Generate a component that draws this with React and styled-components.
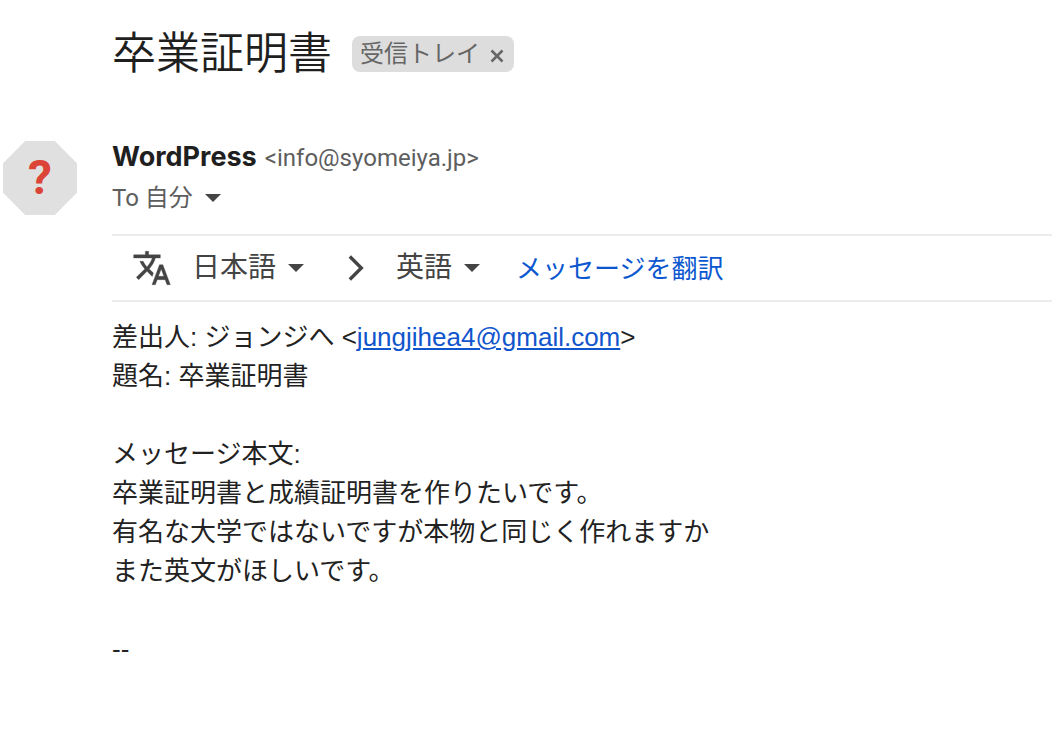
import React, { useState } from 'react';
import styled, { createGlobalStyle } from 'styled-components';

const GlobalStyle = createGlobalStyle`
  body {
    margin: 0;
    background: #fff;
    color: #1f1f1f;
    font-family: Roboto, "Noto Sans CJK JP", sans-serif;
  }

  button, select {
    margin: 0;
    padding: 0;
    border: 0;
    background: none;
    color: inherit;
    font: inherit;
    cursor: pointer;
  }
`

const Page = styled.main`
  padding-top: 20px;
`

const SubjectBar = styled.header`
  display: flex;
  align-items: center;
  gap: 20px;
  height: 68px;
  padding-left: 112px;
`

const Subject = styled.h1`
  margin: 0;
  font-size: 44px;
  font-weight: 350;
  line-height: 68px;
`

const Label = styled.div`
  display: flex;
  align-items: center;
  gap: 10px;
  height: 36px;
  padding: 0 10px 0 8px;
  border-radius: 8px;
  background: #ddd;
  color: #666;
  font-size: 24px;
  line-height: 36px;
`

const RemoveButton = styled.button`
  display: flex;
  padding-top: 4px;
`

const Message = styled.article`
  display: grid;
  grid-template-columns: 112px 1fr;
  margin-top: 49px;
`

const Avatar = styled.div`
  width: 74px;
  height: 74px;
  margin: 4px 0 0 3px;
  background: #e0e0e0;
  clip-path: polygon(30% 0, 70% 0, 100% 30%, 100% 70%, 70% 100%, 30% 100%, 0 70%, 0 30%);
  color: #db4437;
  font-family: Roboto, sans-serif;
  font-size: 48px;
  font-weight: 700;
  line-height: 74px;
  text-align: center;
`

const SenderLine = styled.div`
  display: flex;
  align-items: baseline;
  gap: 8px;
  line-height: 40px;
`

const SenderName = styled.span`
  font-family: Inter, sans-serif;
  font-size: 27px;
  font-weight: 700;
`

const SenderAddress = styled.span`
  color: #5e5e5e;
  font-size: 24px;
`

const Recipient = styled.button`
  display: flex;
  align-items: center;
  gap: 12px;
  height: 40px;
  color: #5e5e5e;
  font-size: 24px;
  line-height: 40px;
`

const TranslateBar = styled.div`
  display: flex;
  align-items: center;
  height: 64px;
  margin-top: 16px;
  padding-left: 20px;
  border-top: 2px solid #ececec;
  border-bottom: 2px solid #ececec;
  color: #444;
`

const LanguagePicker = styled.label`
  display: flex;
  align-items: center;
  gap: 12px;
  margin-left: ${props => props.$gap}px;
  font-size: 28px;
`

const LanguageSelect = styled.select`
  width: ${props => props.$chars}em;
  height: 48px;
  appearance: none;
  line-height: 48px;
`

const Direction = styled.svg`
  margin-left: 44px;
`

const TranslateLink = styled.a`
  margin-left: 36px;
  padding-bottom: 4px;
  color: #0b57d0;
  font-size: 26px;
  text-decoration: none;
`

const Body = styled.div`
  padding-top: 16px;
  color: #222;
  font-family: "Liberation Sans", "Noto Sans CJK JP", sans-serif;
  font-size: 26px;
  line-height: 39px;
`

const Paragraph = styled.p`
  margin: 0 0 39px;
`

const MailLink = styled.a`
  color: #1155cc;
`

const Caret = () => (
  <svg width="16" height="8" viewBox="0 0 16 8" fill="#444" aria-hidden="true">
    <path d="M0 0h16L8 8z" />
  </svg>
)

const TranslateIcon = () => (
  <svg width="40" height="40" viewBox="0 0 24 24" fill="currentColor" stroke="currentColor" strokeWidth="0.2" aria-hidden="true">
    <path d="M12.87 15.07l-2.54-2.51.03-.03c1.74-1.94 2.98-4.17 3.71-6.53H17V4h-7V2H8v2H1v1.99h11.17C11.5 7.92 10.44 9.75 9 11.35 8.07 10.32 7.3 9.19 6.69 8h-2c.73 1.63 1.73 3.17 2.98 4.56l-5.09 5.02L4 19l5-5 3.11 3.11.76-2.04zM18.5 10h-2L12 22h2l1.12-3h4.75L21 22h2l-4.5-12zm-2.62 7l1.62-4.33L19.12 17h-3.24z" />
  </svg>
)

const LANGUAGES = ['日本語', '英語']

const Language = ({ name, initial, gap }) => {
  const [value, setValue] = useState(initial)

  return (
    <LanguagePicker $gap={gap}>
      <LanguageSelect
        aria-label={name}
        $chars={value.length}
        value={value}
        onChange={e => setValue(e.target.value)}
      >
        {LANGUAGES.map(lang => <option key={lang}>{lang}</option>)}
      </LanguageSelect>
      <Caret />
    </LanguagePicker>
  )
}

const App = () => (
  <Page lang="ja">
    <GlobalStyle />

    <SubjectBar>
      <Subject>卒業証明書</Subject>
      <Label>
        <span>受信トレイ</span>
        <RemoveButton type="button" aria-label="削除">
          <svg width="14" height="14" viewBox="0 0 14 14" fill="none" stroke="#666" strokeWidth="2.6">
            <path d="M1.5 1.5l11 11M12.5 1.5l-11 11" />
          </svg>
        </RemoveButton>
      </Label>
    </SubjectBar>

    <Message>
      <Avatar>?</Avatar>
      <div>
        <SenderLine>
          <SenderName>WordPress</SenderName>
          <SenderAddress>&lt;info@syomeiya.jp&gt;</SenderAddress>
        </SenderLine>
        <Recipient type="button">
          <span>To 自分</span>
          <Caret />
        </Recipient>

        <TranslateBar>
          <TranslateIcon />
          <Language name="翻訳元" initial="日本語" gap={20} />
          <Direction width="16" height="26" viewBox="0 0 16 26" fill="none" stroke="#444" strokeWidth="3.4" aria-hidden="true">
            <path d="M1.8 1.5L13.3 13 1.8 24.5" />
          </Direction>
          <Language name="翻訳先" initial="英語" gap={32} />
          <TranslateLink href="#translate">メッセージを翻訳</TranslateLink>
        </TranslateBar>

        <Body>
          <Paragraph>
            差出人: ジョンジへ &lt;<MailLink href="mailto:jungjihea4@gmail.com">jungjihea4@gmail.com</MailLink>&gt;<br />
            題名: 卒業証明書
          </Paragraph>
          <Paragraph>
            メッセージ本文:<br />
            卒業証明書と成績証明書を作りたいです。<br />
            有名な大学ではないですが本物と同じく作れますか<br />
            また英文がほしいです。
          </Paragraph>
          <Paragraph>--</Paragraph>
        </Body>
      </div>
    </Message>
  </Page>
)

export default App;
